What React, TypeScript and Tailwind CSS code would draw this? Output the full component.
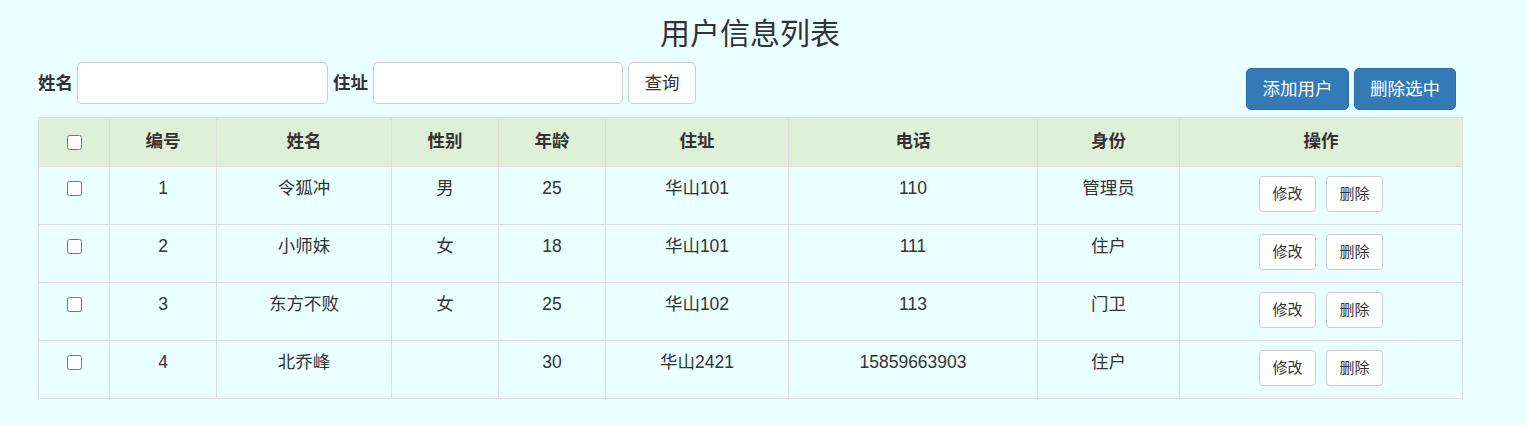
import React from "react";

const rows = [
  { id: 1, name: "令狐冲", sex: "男", age: 25, addr: "华山101", tel: "110", role: "管理员" },
  { id: 2, name: "小师妹", sex: "女", age: 18, addr: "华山101", tel: "111", role: "住户" },
  { id: 3, name: "东方不败", sex: "女", age: 25, addr: "华山102", tel: "113", role: "门卫" },
  { id: 4, name: "北乔峰", sex: "", age: 30, addr: "华山2421", tel: "15859663903", role: "住户" },
];

const widths = [71, 107, 175, 107, 107, 183, 249, 142, 283];
const heads = ["编号", "姓名", "性别", "年龄", "住址", "电话", "身份", "操作"];

export default function App() {
  return (
    <div
      className="min-h-[425px] w-full bg-[#eaffff] text-[#333] text-[17.5px]"
      style={{ fontFamily: '"Liberation Sans", "Noto Sans CJK SC", sans-serif' }}
    >
      <div className="ml-[38px] w-[1424px]">
        <h3 className="pt-[17px] text-center text-[30px] font-normal leading-[33px] text-[#333]">
          用户信息列表
        </h3>
        <div className="mt-[12px] flex items-start justify-between">
          <div className="flex items-center">
            <label className="mr-[4px] font-bold leading-[25px]">姓名</label>
            <input
              type="text"
              className="h-[42px] w-[251px] rounded-[5px] border border-[#ccc] bg-white px-[15px] outline-none"
            />
            <label className="ml-[5px] mr-[5px] font-bold leading-[25px]">住址</label>
            <input
              type="text"
              className="h-[42px] w-[250px] rounded-[5px] border border-[#ccc] bg-white px-[15px] outline-none"
            />
            <button className="ml-[5px] h-[42px] w-[68px] rounded-[5px] border border-[#ccc] bg-white text-[#333]">
              查询
            </button>
          </div>
          <div className="mr-[6px] mt-[6px] flex gap-[5px]">
            <button className="h-[42px] w-[103px] rounded-[5px] border border-[#2e6da4] bg-[#337ab7] text-white">
              添加用户
            </button>
            <button className="h-[42px] w-[102px] rounded-[5px] border border-[#2e6da4] bg-[#337ab7] text-white">
              删除选中
            </button>
          </div>
        </div>
        <table className="mt-[7px] w-[1424px] table-fixed border-collapse border border-[#ddd]">
          <colgroup>
            {widths.map((w, i) => (
              <col key={i} style={{ width: w }} />
            ))}
          </colgroup>
          <thead>
            <tr className="h-[49px] bg-[#dff0d8]">
              <th className="border border-[#ddd] p-0 align-middle">
                <input type="checkbox" className="mx-auto block h-[15px] w-[15px]" />
              </th>
              {heads.map((h) => (
                <th
                  key={h}
                  className="border border-[#ddd] pb-[1px] text-center align-middle font-bold leading-[25px]"
                >
                  {h}
                </th>
              ))}
            </tr>
          </thead>
          <tbody>
            {rows.map((r) => (
              <tr key={r.id} className="h-[58px]">
                <td className="border border-[#ddd] px-[10px] pt-[9px] align-top">
                  <div className="flex h-[25px] items-center justify-center">
                    <input type="checkbox" className="m-0 block h-[15px] w-[15px]" />
                  </div>
                </td>
                <td className="border border-[#ddd] px-[10px] pt-[9px] text-center align-top leading-[25px]">{r.id}</td>
                <td className="border border-[#ddd] px-[10px] pt-[9px] text-center align-top leading-[25px]">{r.name}</td>
                <td className="border border-[#ddd] px-[10px] pt-[9px] text-center align-top leading-[25px]">{r.sex}</td>
                <td className="border border-[#ddd] px-[10px] pt-[9px] text-center align-top leading-[25px]">{r.age}</td>
                <td className="border border-[#ddd] px-[10px] pt-[9px] text-center align-top leading-[25px]">{r.addr}</td>
                <td className="border border-[#ddd] px-[10px] pt-[9px] text-center align-top leading-[25px]">{r.tel}</td>
                <td className="border border-[#ddd] px-[10px] pt-[9px] text-center align-top leading-[25px]">{r.role}</td>
                <td className="border border-[#ddd] px-[10px] pt-[9px] align-top">
                  <div className="flex justify-center gap-[10px]">
                    <button className="h-[36px] w-[57px] rounded-[4px] border border-[#ccc] bg-white text-[15px] text-[#333]">
                      修改
                    </button>
                    <button className="h-[36px] w-[57px] rounded-[4px] border border-[#ccc] bg-white text-[15px] text-[#333]">
                      删除
                    </button>
                  </div>
                </td>
              </tr>
            ))}
          </tbody>
        </table>
      </div>
    </div>
  );
}
